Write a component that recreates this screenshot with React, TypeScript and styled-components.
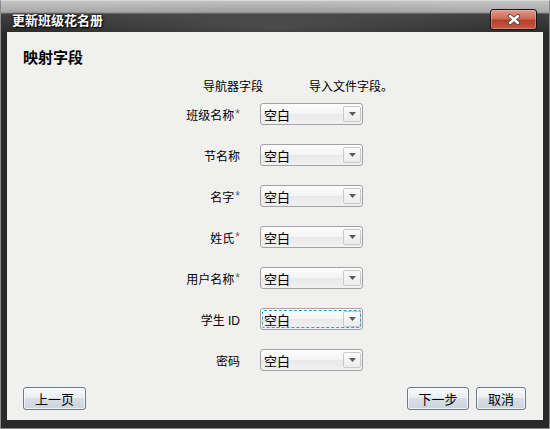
import { Fragment } from "react";
import styled, { createGlobalStyle } from "styled-components";

const GlobalStyle = createGlobalStyle`
  html, body {
    margin: 0;
    padding: 0;
    background: #f0f0ee;
  }
  body {
    font-family: "Liberation Sans", "Noto Sans CJK SC", sans-serif;
  }
`;

const Window = styled.div`
  width: 550px;
  height: 429px;
  box-sizing: border-box;
  display: flex;
  flex-direction: column;
  background: #2a2a2a;
  border: 1px solid #8c8c8c;
  border-top-color: #d8d8d8;
  padding: 0 6px 8px;
`;

const TitleBar = styled.div`
  height: 31px;
  margin: 0 -6px;
  display: flex;
  align-items: center;
  justify-content: space-between;
  padding: 0 12px 0 11px;
  background:
    radial-gradient(ellipse 260px 30px at 50% 85%, rgba(120, 120, 120, 0.35), transparent),
    linear-gradient(
      #c4c4c4 0,
      #a9a9a9 11px,
      #8a8a8a 12px,
      #3f3f3f 13px,
      #353535 24px,
      #2c2c2c 31px
    );
`;

const Title = styled.span`
  color: #fff;
  font-size: 13px;
  font-weight: bold;
  padding-top: 6px;
  text-shadow: 0 0 3px #000, 1px 1px 1px #000;
`;

const CloseButton = styled.button`
  width: 47px;
  height: 21px;
  margin-top: 5px;
  padding: 0;
  display: flex;
  align-items: center;
  justify-content: center;
  border: 1px solid #151515;
  border-radius: 3px;
  background: linear-gradient(#e19a8a 0, #cf6a55 45%, #b5412c 55%, #c45a45 100%);
  box-shadow: inset 0 0 0 1px rgba(255, 210, 200, 0.35);
`;

const Content = styled.div`
  flex: 1;
  display: flex;
  flex-direction: column;
  background: #f0f0ee;
  color: #000;
`;

const Heading = styled.h1`
  margin: 16px 0 0 16px;
  font-size: 15px;
  line-height: 20px;
  font-weight: bold;
`;

const ColumnHeads = styled.div`
  display: flex;
  gap: 46px;
  margin: 11px 0 0 196px;
  font-size: 12px;
  line-height: 16px;
`;

const FieldGrid = styled.div`
  display: grid;
  grid-template-columns: 233px 103px;
  grid-auto-rows: 22px;
  column-gap: 20px;
  row-gap: 19px;
  margin-top: 8px;
  align-items: center;
`;

const Label = styled.span`
  text-align: right;
  font-size: 12px;
`;

const Star = styled.span<{ tint: string }>`
  color: ${({ tint }) => tint};
  font-size: 12px;
  position: relative;
  top: -2px;
  margin-left: 1px;
`;

const Select = styled.div<{ focused?: boolean }>`
  position: relative;
  height: 22px;
  box-sizing: border-box;
  display: flex;
  align-items: center;
  justify-content: space-between;
  padding: 0 1px 0 3px;
  border: 1px solid #a3a3a3;
  border-radius: 3px;
  background: linear-gradient(#fdfdfd 0, #f4f4f4 50%, #e9e9e9 51%, #f1f1f1 100%);
  font-size: 13px;

  &::after {
    content: "";
    display: ${({ focused }) => (focused ? "block" : "none")};
    position: absolute;
    inset: 1px;
    border: 1px dashed #2c9ad0;
    border-radius: 2px;
    pointer-events: none;
  }
`;

const ArrowBox = styled.span`
  width: 18px;
  height: 16px;
  box-sizing: border-box;
  display: flex;
  align-items: center;
  justify-content: center;
  border: 1px solid #c9c9c9;
  border-radius: 2px;
  background: linear-gradient(#fbfbfb, #ececec);
`;

const Footer = styled.div`
  margin-top: auto;
  display: flex;
  align-items: center;
  gap: 7px;
  padding: 0 17px 10px 16px;
`;

const Spacer = styled.div`
  flex: 1;
`;

const Button = styled.button<{ w: number }>`
  width: ${({ w }) => w}px;
  height: 23px;
  padding: 0;
  border: 1px solid #707a86;
  border-radius: 3px;
  background: linear-gradient(#f6f8fa 0, #eceff2 45%, #d9dee4 50%, #cdd4dc 100%);
  box-shadow: inset 0 0 0 1px rgba(255, 255, 255, 0.7);
  font-family: "Liberation Sans", "Noto Sans CJK SC", sans-serif;
  font-size: 13px;
  color: #000;
`;

const fields: { label: string; star?: string; focused?: boolean }[] = [
  { label: "班级名称", star: "#4b6a52" },
  { label: "节名称" },
  { label: "名字", star: "#3d5fb4" },
  { label: "姓氏", star: "#b23a4a" },
  { label: "用户名称", star: "#3f7a4e" },
  { label: "学生 ID", focused: true },
  { label: "密码" },
];

function CloseIcon() {
  return (
    <svg width="14" height="11" viewBox="0 0 14 11">
      <path d="M3 2 L11 9 M11 2 L3 9" stroke="#4a4a4a" strokeWidth="4.2" strokeLinecap="round" />
      <path d="M3 2 L11 9 M11 2 L3 9" stroke="#fff" strokeWidth="2.4" strokeLinecap="round" />
    </svg>
  );
}

function Arrow() {
  return (
    <svg width="7" height="4" viewBox="0 0 7 4">
      <path d="M0 0 H7 L3.5 4 Z" fill="#5a5a5a" />
    </svg>
  );
}

export default function App() {
  return (
    <>
      <GlobalStyle />
      <Window>
        <TitleBar>
          <Title>更新班级花名册</Title>
          <CloseButton aria-label="关闭">
            <CloseIcon />
          </CloseButton>
        </TitleBar>
        <Content>
          <Heading>映射字段</Heading>
          <ColumnHeads>
            <span>导航器字段</span>
            <span>导入文件字段。</span>
          </ColumnHeads>
          <FieldGrid>
            {fields.map(f => (
              <Fragment key={f.label}>
                <Label>
                  {f.label}
                  {f.star && <Star tint={f.star}>*</Star>}
                </Label>
                <Select focused={f.focused}>
                  <span>空白</span>
                  <ArrowBox>
                    <Arrow />
                  </ArrowBox>
                </Select>
              </Fragment>
            ))}
          </FieldGrid>
          <Footer>
            <Button w={63}>上一页</Button>
            <Spacer />
            <Button w={62}>下一步</Button>
            <Button w={50}>取消</Button>
          </Footer>
        </Content>
      </Window>
    </>
  );
}
